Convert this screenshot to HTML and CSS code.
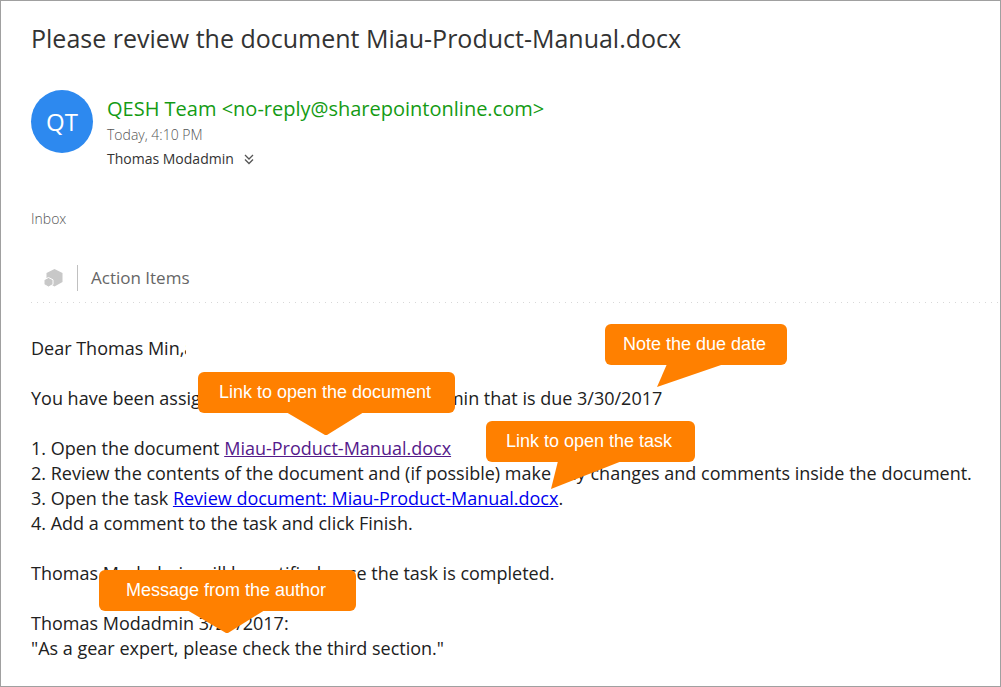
FILE: index.html
```html
<!DOCTYPE html>
<html lang="en">
<head>
<meta charset="utf-8">
<title>Please review the document</title>
<link rel="stylesheet" href="styles.css">
</head>
<body>
<main class="mail">
  <h1 class="subject">Please review the document Miau-Product-Manual.docx</h1>
  <header class="sender">
    <div class="avatar">QT</div>
    <div class="meta">
      <div class="from">QESH Team &lt;no-reply@sharepointonline.com&gt;</div>
      <div class="date">Today, 4:10 PM</div>
      <div class="to">
        <span>Thomas Modadmin</span>
        <button class="expand" type="button" aria-label="Show details">
          <svg width="10" height="11" viewBox="0 0 10 11"><path d="M1 1l4 4 4-4M1 5.500l4 4 4-4" fill="none" stroke="#555" stroke-width="1.300"/></svg>
        </button>
      </div>
    </div>
  </header>
  <div class="folder">Inbox</div>
  <div class="addins">
    <svg class="addin-icon" width="19" height="18" viewBox="0 0 19 18">
      <path d="M10.500 0l8 4v9l-8 4.500-8-4.500V4z" fill="#c8c8c8"/>
      <path d="M4.500 8.500l4.500 2.300v4.700l-4.500 2.500L0 15.500v-4.700z" fill="#c8c8c8" stroke="#fff"/>
    </svg>
    <button class="addin" type="button">Action Items</button>
  </div>
  <article class="message">
    <p>Dear Thomas Min,<span class="remnant">a</span></p>
    <p>You have been assigned a task by Thomas Modadmin that is due 3/30/2017</p>
    <p>1. Open the document <a class="visited" href="#document">Miau-Product-Manual.docx</a><br>
    2. Review the contents of the document and (if possible) make any changes and comments inside the document.<br>
    3. Open the task <a href="#task">Review document: Miau-Product-Manual.docx</a>.<br>
    4. Add a comment to the task and click Finish.</p>
    <p>Thomas Modadmin will be notified once the task is completed.</p>
    <p>Thomas Modadmin 3/27/2017:<br>
    "As a gear expert, please check the third section."</p>
  </article>

  <aside class="callout callout-date">Note the due date
    <svg class="tail" width="182" height="24" viewBox="0 0 182 24"><path d="M62 0h57L52 23z"/></svg>
  </aside>
  <aside class="callout callout-document">Link to open the document
    <svg class="tail" width="257" height="24" viewBox="0 0 257 24"><path d="M88 0h78l-37 23h-2z"/></svg>
  </aside>
  <aside class="callout callout-task">Link to open the task
    <svg class="tail" width="209" height="29" viewBox="0 0 209 29"><path d="M72 0h64L65 28z"/></svg>
  </aside>
  <aside class="callout callout-message">Message from the author
    <svg class="tail" width="257" height="24" viewBox="0 0 257 24"><path d="M88 0h78l-37 23h-2z"/></svg>
  </aside>
</main>
</body>
</html>
```

FILE: styles.css
```css
* { box-sizing: border-box; }
body {
  margin: 0;
  background: #fff;
  color: #212121;
  font-family: "Open Sans", "Noto Sans", sans-serif;
  font-size: 18px;
}
.mail {
  position: relative;
  min-height: 100vh;
  padding: 21px 0 24px 30px;
  border: 1px solid #a0a0a0;
}
.subject {
  margin: 0;
  font-size: 25px;
  line-height: 32px;
  font-weight: 400;
  color: #333;
}
.sender {
  display: flex;
  gap: 14px;
  margin-top: 36px;
}
.avatar {
  display: flex;
  align-items: center;
  justify-content: center;
  width: 62px;
  height: 63px;
  border-radius: 50%;
  background: #2d89ef;
  color: #fff;
  font-size: 24px;
}
.meta { padding-top: 5px; }
.from {
  color: #149b14;
  font-size: 20px;
  line-height: 28px;
}
.date {
  color: #555;
  font-size: 14px;
  font-weight: 300;
  line-height: 24px;
}
.to {
  display: flex;
  align-items: center;
  gap: 10px;
  font-size: 14px;
  line-height: 24px;
  color: #333;
}
.expand, .addin {
  padding: 0;
  border: 0;
  background: none;
  font: inherit;
  color: inherit;
}
.expand { display: flex; }
.folder {
  margin-top: 36px;
  color: #555;
  font-size: 14px;
  font-weight: 300;
  line-height: 24px;
}
.addins {
  display: flex;
  align-items: center;
  gap: 14px;
  margin-top: 24px;
  padding: 10px 0 12px 13px;
  height: 48px;
  background: repeating-linear-gradient(90deg, #d8d8d8 0 1px, transparent 1px 6px) 0 100% / 100% 1px no-repeat;
}
.addin {
  padding-left: 13px;
  border-left: 1px solid #c0c0c0;
  font-size: 17px;
  line-height: 26px;
  color: #666;
}
.message {
  padding-top: 33px;
  line-height: 25px;
}
.message p { margin: 0 0 25px; }
.message p:last-child { margin: 0; }
.message a { color: #00e; }
.message .visited { color: #551a8b; }
.remnant {
  display: inline-block;
  width: 2px;
  height: 25px;
  overflow: hidden;
  vertical-align: top;
}
.callout {
  position: absolute;
  height: 41px;
  padding-right: 3px;
  border-radius: 6px;
  background: #ff8000;
  color: #fff;
  font-family: "Liberation Sans", Arial, sans-serif;
  font-size: 18px;
  line-height: 40px;
  text-align: center;
  white-space: nowrap;
}
.tail {
  position: absolute;
  top: 100%;
  left: 0;
  margin-top: -1px;
  fill: #ff8000;
}
.callout-date { left: 604px; top: 323px; width: 182px; }
.callout-document { left: 197px; top: 371px; width: 257px; }
.callout-task { left: 485px; top: 420px; width: 209px; }
.callout-message { left: 98px; top: 569px; width: 257px; }
```
